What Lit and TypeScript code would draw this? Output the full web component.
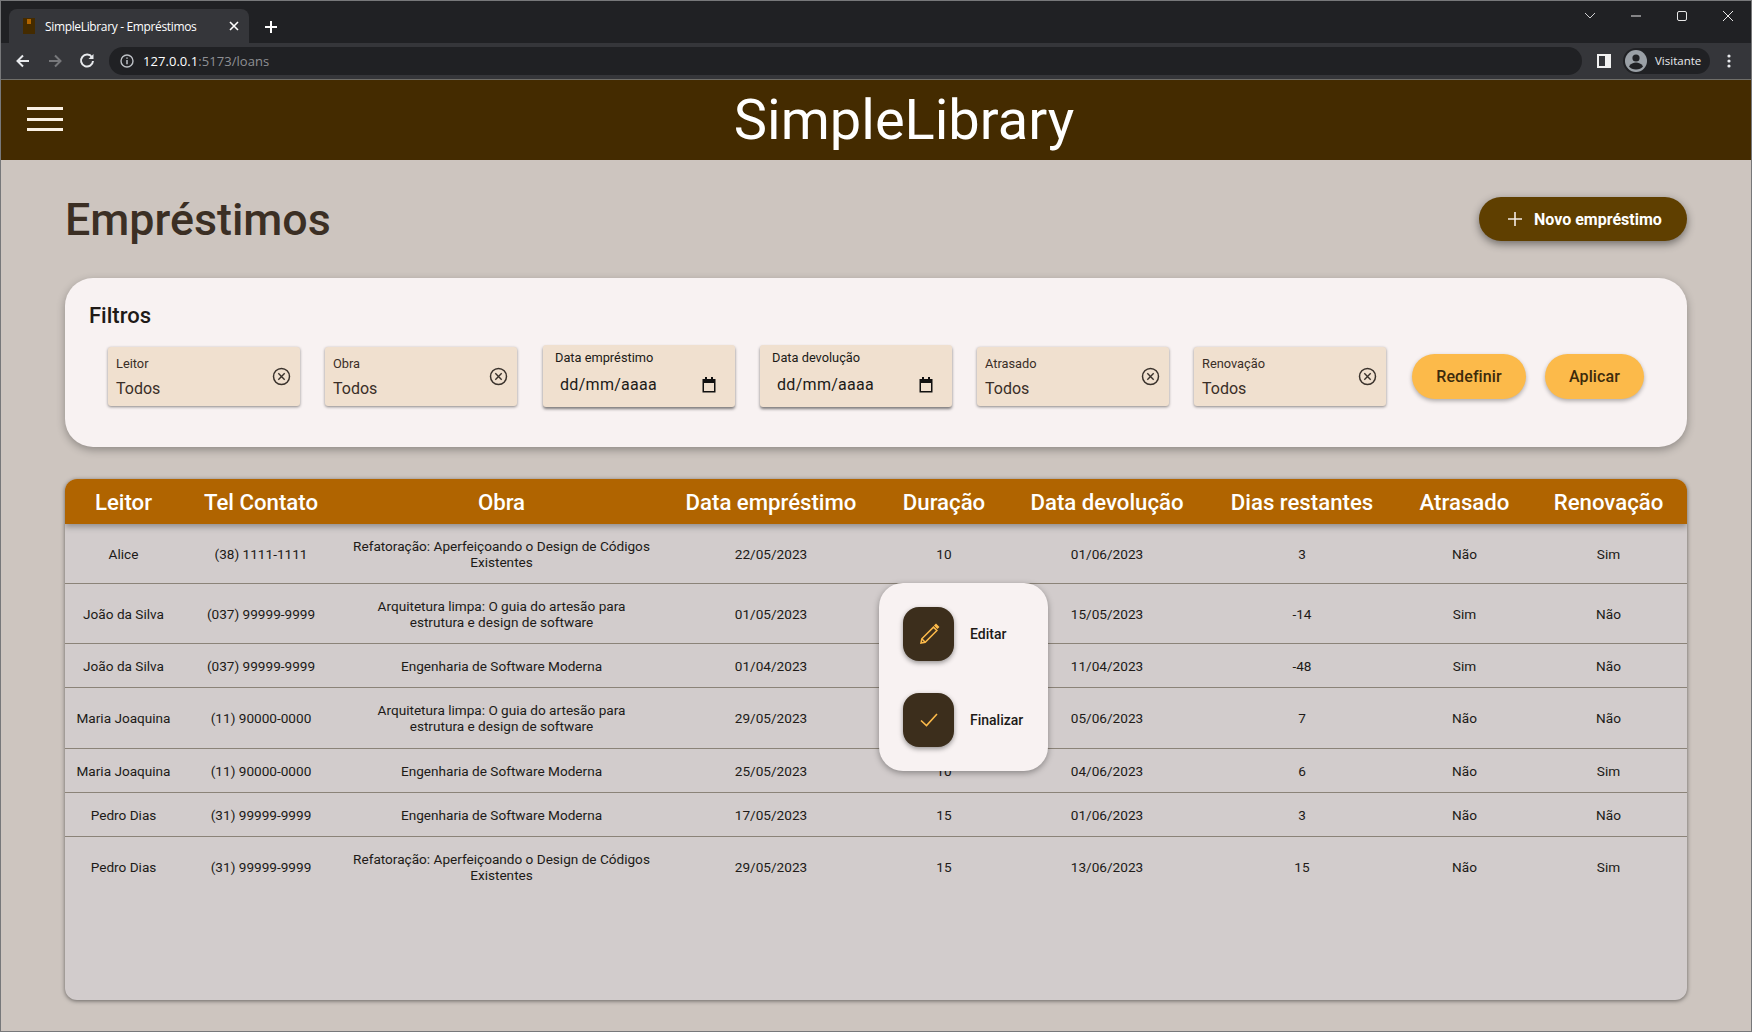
import { LitElement, html, css, svg } from "lit";
import { customElement } from "lit/decorators.js";

const rows = [
  ["Alice", "(38) 1111-1111", "Refatoração: Aperfeiçoando o Design de Códigos Existentes", "22/05/2023", "10", "01/06/2023", "3", "Não", "Sim"],
  ["João da Silva", "(037) 99999-9999", "Arquitetura limpa: O guia do artesão para estrutura e design de software", "01/05/2023", "14", "15/05/2023", "-14", "Sim", "Não"],
  ["João da Silva", "(037) 99999-9999", "Engenharia de Software Moderna", "01/04/2023", "10", "11/04/2023", "-48", "Sim", "Não"],
  ["Maria Joaquina", "(11) 90000-0000", "Arquitetura limpa: O guia do artesão para estrutura e design de software", "29/05/2023", "7", "05/06/2023", "7", "Não", "Não"],
  ["Maria Joaquina", "(11) 90000-0000", "Engenharia de Software Moderna", "25/05/2023", "10", "04/06/2023", "6", "Não", "Sim"],
  ["Pedro Dias", "(31) 99999-9999", "Engenharia de Software Moderna", "17/05/2023", "15", "01/06/2023", "3", "Não", "Não"],
  ["Pedro Dias", "(31) 99999-9999", "Refatoração: Aperfeiçoando o Design de Códigos Existentes", "29/05/2023", "15", "13/06/2023", "15", "Não", "Sim"],
];

const headers = ["Leitor", "Tel Contato", "Obra", "Data empréstimo", "Duração", "Data devolução", "Dias restantes", "Atrasado", "Renovação"];

const clearIcon = svg`<circle cx="9.500" cy="9.500" r="8" fill="none" stroke="#3a322c" stroke-width="1.500"/><path d="M6.300 6.300l6.400 6.400M12.700 6.300l-6.400 6.400" stroke="#3a322c" stroke-width="1.400" fill="none"/>`;

@customElement("app-root")
export class AppRoot extends LitElement {
  static styles = css`
    :host {
      display: flex;
      flex-direction: column;
      width: 1752px;
      height: 1032px;
      box-sizing: border-box;
      border: 1px solid #77787a;
      background: #cdc5bf;
      font-family: Roboto, sans-serif;
      color: #201a17;
      overflow: hidden;
    }
    svg {
      display: block;
      flex: none;
    }

    /* browser chrome */
    .tabstrip {
      height: 42px;
      background: #202124;
      display: flex;
      align-items: flex-end;
      padding-left: 8px;
      flex: none;
    }
    .tab {
      width: 240px;
      height: 34px;
      background: #35363a;
      border-radius: 8px 8px 0 0;
      display: flex;
      align-items: center;
      box-sizing: border-box;
      padding: 0 10px 0 14px;
      color: #fff;
      font: 12px "Open Sans", sans-serif;
    }
    .tab-title {
      flex: 1;
      margin-left: 10px;
      letter-spacing: -0.35px;
    }
    .new-tab {
      margin: 0 0 9px 15px;
    }
    .win-controls {
      margin-left: auto;
      display: flex;
      align-self: flex-start;
      align-items: center;
      height: 30px;
      padding-right: 17px;
      gap: 34px;
    }
    .toolbar {
      height: 37px;
      box-sizing: border-box;
      padding: 0 0 1px 12px;
      background: #35363a;
      display: flex;
      align-items: center;
      flex: none;
      border-bottom: 1px solid #6f6e69;
    }
    .nav {
      display: flex;
      gap: 12px;
    }
    .omnibox {
      width: 1473px;
      height: 28px;
      margin-left: 12px;
      border-radius: 14px;
      background: #202124;
      display: flex;
      align-items: center;
      padding-left: 10px;
      box-sizing: border-box;
      font: 13px "Open Sans", sans-serif;
      letter-spacing: 0.05px;
      color: #fff;
    }
    .omnibox span {
      margin-left: 8px;
    }
    .omnibox i {
      font-style: normal;
      color: #8f9094;
    }
    .sidebar-btn {
      margin-left: 15px;
    }
    .profile {
      margin-left: 12px;
      width: 87px;
      height: 26px;
      border-radius: 13px;
      background: #202124;
      display: flex;
      align-items: center;
      padding-left: 2px;
      box-sizing: border-box;
      color: #e8eaed;
      font: 11.5px "Open Sans", sans-serif;
      gap: 8px;
    }
    .dots {
      margin-left: 17px;
    }

    /* app bar */
    .appbar {
      height: 80px;
      flex: none;
      background: #442b00;
      display: flex;
      align-items: center;
      padding: 0 6px 0 26px;
    }
    .menu {
      display: flex;
      flex-direction: column;
      gap: 7.5px;
      width: 36px;
      margin-top: -2px;
    }
    .menu b {
      height: 3px;
      background: #fbf1e4;
    }
    .brand {
      flex: 1;
      text-align: center;
      color: #fff;
      font-size: 56px;
      line-height: 80px;
    }

    /* page */
    .page {
      flex: 1;
      padding: 37px 64px 0;
    }
    .title-row {
      display: flex;
      align-items: center;
      justify-content: space-between;
      height: 44px;
    }
    h1 {
      margin: 0;
      font-size: 44.8px;
      font-weight: 500;
      color: #3b2f24;
    }
    .fab {
      display: flex;
      align-items: center;
      gap: 11px;
      height: 44px;
      width: 208px;
      box-sizing: border-box;
      padding-left: 28px;
      border-radius: 22px;
      background: #5f3f00;
      color: #fff;
      font-size: 16px;
      font-weight: 700;
      box-shadow: 0 3px 8px rgba(0, 0, 0, 0.45);
    }

    .filters {
      margin-top: 37px;
      height: 169px;
      box-sizing: border-box;
      padding: 25px 24px 0;
      border-radius: 28px;
      background: #f8f2f2;
      box-shadow: 0 3px 8px rgba(0, 0, 0, 0.3);
    }
    h2 {
      margin: 0;
      font-size: 22px;
      font-weight: 500;
      line-height: 26px;
    }
    .filter-row {
      display: flex;
      align-items: center;
      gap: 25px;
      margin-top: 16px;
      padding-left: 19px;
      height: 62px;
    }
    .field {
      width: 192px;
      height: 59px;
      box-sizing: border-box;
      padding: 0 9px 0 8px;
      background: #f0e0cf;
      border-radius: 3px;
      box-shadow: 0 1px 3px rgba(0, 0, 0, 0.45);
      display: flex;
      align-items: center;
      justify-content: space-between;
      color: #3a2e27;
    }
    .field-text {
      padding-top: 3px;
    }
    .field label {
      display: block;
      font-size: 12.8px;
      line-height: 14px;
    }
    .field .value {
      display: block;
      font-size: 16px;
      line-height: 20px;
      margin-top: 8px;
    }
    .date {
      height: 62px;
      display: block;
      padding: 6px 0 0 12px;
      color: #201a17;
      box-shadow: 0 2px 3px rgba(0, 0, 0, 0.5);
    }
    .field.date:nth-child(3) {
      margin-left: 1px;
    }
    .date .line {
      display: flex;
      align-items: center;
      justify-content: space-between;
      padding: 0 19px 0 5px;
      margin-top: 10px;
      font-size: 16px;
      line-height: 20px;
      letter-spacing: 0.3px;
    }
    .btn {
      height: 45px;
      border-radius: 22.5px;
      background: #fcba4a;
      color: #3d2b0c;
      font-size: 16px;
      letter-spacing: 0.1px;
      font-weight: 500;
      display: flex;
      align-items: center;
      justify-content: center;
      box-shadow: 0 2px 4px rgba(0, 0, 0, 0.3);
    }
    .btn.reset {
      width: 114px;
      margin-left: 1px;
    }
    .btn.apply {
      width: 99px;
      margin-left: -6px;
    }

    /* table */
    .table-wrap {
      position: relative;
      margin-top: 32px;
      height: 521px;
    }
    .table {
      height: 100%;
      border-radius: 12px;
      background: #d2cccc;
      box-shadow: 0 1px 4px rgba(0, 0, 0, 0.5);
      overflow: hidden;
    }
    .row {
      display: grid;
      grid-template-columns: 117px 158px 323px 216px 130px 196px 194px 131px 157px;
      align-items: center;
      text-align: center;
    }
    .head {
      position: relative;
      height: 45px;
      background: #b06400;
      color: #fff;
      font-size: 22.2px;
      font-weight: 500;
      white-space: nowrap;
      box-shadow: 0 3px 6px rgba(0, 0, 0, 0.3);
    }
    .body-row {
      font-size: 13.6px;
      line-height: 16px;
      padding: 14px 0 13px;
      border-bottom: 1px solid #8b8378;
    }
    .body-row:nth-child(5) {
      padding-bottom: 14px;
    }
    .body-row:last-child {
      border-bottom: 0;
    }
    .body-row .work {
      padding: 0 12px;
    }

    /* row actions */
    .popup {
      position: absolute;
      left: 814px;
      top: 104px;
      width: 169px;
      height: 188px;
      box-sizing: border-box;
      padding: 24px;
      display: flex;
      flex-direction: column;
      gap: 32px;
      border-radius: 24px;
      background: #f8f2f2;
      box-shadow: 0 2px 6px rgba(0, 0, 0, 0.35);
    }
    .action {
      display: flex;
      align-items: center;
      gap: 16px;
      font-size: 14px;
      font-weight: 500;
      color: #201a17;
    }
    .action-btn {
      width: 51px;
      height: 54px;
      border-radius: 16px;
      background: #3c2e1c;
      display: flex;
      align-items: center;
      justify-content: center;
      box-shadow: 0 2px 5px rgba(0, 0, 0, 0.4);
    }
  `;

  private renderSelect(label: string) {
    return html`<div class="field">
      <div class="field-text"><label>${label}</label><span class="value">Todos</span></div>
      <svg width="19" height="19" viewBox="0 0 19 19">${clearIcon}</svg>
    </div>`;
  }

  private renderDate(label: string) {
    return html`<div class="field date">
      <label>${label}</label>
      <div class="line">
        <span>dd/mm/aaaa</span>
        <svg width="14" height="16" viewBox="0 0 14 16">
          <path d="M3 0h2v2h4V0h2v2h2.500v13.500H.5V2H3z" fill="#111"/>
          <rect x="2" y="6" width="10" height="8" fill="#f0e0cf"/>
        </svg>
      </div>
    </div>`;
  }

  private renderChrome() {
    return html`
      <div class="tabstrip">
        <div class="tab">
          <svg width="12" height="16" viewBox="0 0 12 16">
            <rect width="12" height="16" fill="#442b00"/>
            <rect x="4" y="1" width="4" height="5" fill="#b06400"/>
          </svg>
          <span class="tab-title">SimpleLibrary - Empréstimos</span>
          <svg width="10" height="10" viewBox="0 0 10 10"><path d="M1 1l8 8M9 1l-8 8" stroke="#fff" stroke-width="1.600"/></svg>
        </div>
        <svg class="new-tab" width="14" height="14" viewBox="0 0 14 14"><path d="M7 1v12M1 7h12" stroke="#fff" stroke-width="2"/></svg>
        <div class="win-controls">
          <svg width="12" height="8" viewBox="0 0 12 8"><path d="M1 1l5 5 5-5" stroke="#cfd0d2" fill="none"/></svg>
          <svg width="12" height="12" viewBox="0 0 12 12"><path d="M1 6h10" stroke="#e8e8e8"/></svg>
          <svg width="12" height="12" viewBox="0 0 12 12"><rect x="1.500" y="1.500" width="9" height="9" rx="1.500" stroke="#e8e8e8" fill="none"/></svg>
          <svg width="12" height="12" viewBox="0 0 12 12"><path d="M1 1l10 10M11 1L1 11" stroke="#e8e8e8"/></svg>
        </div>
      </div>
      <div class="toolbar">
        <div class="nav">
          <svg width="20" height="20" viewBox="0 0 20 20"><path d="M16 10H5M10 4.500L4.500 10l5.500 5.500" stroke="#e8eaed" stroke-width="2" fill="none"/></svg>
          <svg width="20" height="20" viewBox="0 0 20 20"><path d="M4 10h11M10 4.500l5.500 5.500-5.500 5.500" stroke="#77787b" stroke-width="2" fill="none"/></svg>
          <svg width="20" height="20" viewBox="0 0 20 20"><path d="M15 6.200A6 6 0 1 0 16 10" stroke="#e8eaed" stroke-width="2" fill="none"/><path d="M16.500 3v5h-5z" fill="#e8eaed"/></svg>
        </div>
        <div class="omnibox">
          <svg width="16" height="16" viewBox="0 0 16 16"><circle cx="8" cy="8" r="6" stroke="#bdc1c6" stroke-width="1.400" fill="none"/><path d="M8 7v4.200M8 4.400v1.400" stroke="#bdc1c6" stroke-width="1.500"/></svg>
          <span>127.0.0.1<i>:5173/loans</i></span>
        </div>
        <svg class="sidebar-btn" width="14" height="14" viewBox="0 0 14 14"><rect width="14" height="14" fill="#f1f1f1"/><rect x="2" y="2" width="6" height="10" fill="#35363a"/></svg>
        <div class="profile">
          <svg width="22" height="22" viewBox="0 0 22 22"><circle cx="11" cy="11" r="11" fill="#9aa0a6"/><circle cx="11" cy="8" r="3.600" fill="#202124"/><path d="M4 16.500c1.500-3 4.500-4 7-4s5.500 1 7 4c-1.500 2-4 3-7 3s-5.500-1-7-3z" fill="#202124"/></svg>
          Visitante
        </div>
        <svg class="dots" width="4" height="14" viewBox="0 0 4 14"><circle cx="2" cy="2" r="1.600" fill="#e8eaed"/><circle cx="2" cy="7" r="1.600" fill="#e8eaed"/><circle cx="2" cy="12" r="1.600" fill="#e8eaed"/></svg>
      </div>
    `;
  }

  render() {
    return html`
      ${this.renderChrome()}
      <header class="appbar">
        <div class="menu"><b></b><b></b><b></b></div>
        <div class="brand">SimpleLibrary</div>
      </header>
      <main class="page">
        <div class="title-row">
          <h1>Empréstimos</h1>
          <div class="fab">
            <svg width="16" height="16" viewBox="0 0 16 16"><path d="M8 1v14M1 8h14" stroke="#f4ece4" stroke-width="1.600"/></svg>
            Novo empréstimo
          </div>
        </div>
        <section class="filters">
          <h2>Filtros</h2>
          <div class="filter-row">
            ${this.renderSelect("Leitor")}
            ${this.renderSelect("Obra")}
            ${this.renderDate("Data empréstimo")}
            ${this.renderDate("Data devolução")}
            ${this.renderSelect("Atrasado")}
            ${this.renderSelect("Renovação")}
            <div class="btn reset">Redefinir</div>
            <div class="btn apply">Aplicar</div>
          </div>
        </section>
        <div class="table-wrap">
          <div class="table">
            <div class="row head">${headers.map((h) => html`<div>${h}</div>`)}</div>
            ${rows.map(
              (r) => html`<div class="row body-row">
                ${r.map((c, i) => html`<div class=${i === 2 ? "work" : ""}>${c}</div>`)}
              </div>`
            )}
          </div>
          <div class="popup">
            <div class="action">
              <div class="action-btn">
                <svg width="24" height="24" viewBox="0 0 24 24" fill="none" stroke="#fcba4a" stroke-width="1.500">
                  <path d="M4 21l.8-4.200L16.500 5.100l3.400 3.400L8.200 20.200z"/>
                  <path d="M4.800 16.800l3.400 3.400"/>
                  <path d="M18 3.600l1-1 2.400 2.400-1 1z" fill="#fcba4a"/>
                </svg>
              </div>
              Editar
            </div>
            <div class="action">
              <div class="action-btn">
                <svg width="24" height="24" viewBox="0 0 24 24" fill="none" stroke="#fcba4a" stroke-width="1.600"><path d="M4 12.500l5.500 5L20 6"/></svg>
              </div>
              Finalizar
            </div>
          </div>
        </div>
      </main>
    `;
  }
}
